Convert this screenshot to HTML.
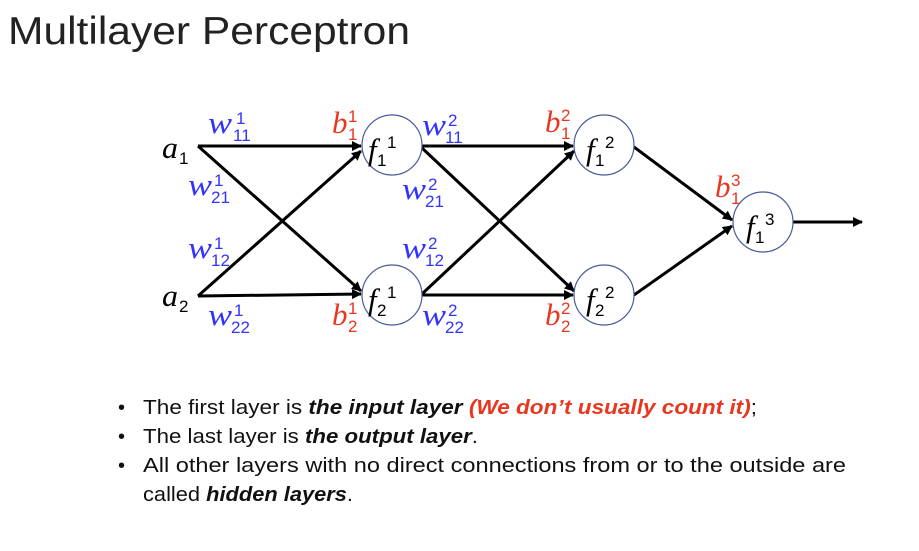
<!DOCTYPE html>
<html><head><style>
body{margin:0;background:#fff;width:919px;height:551px;overflow:hidden;font-family:"Liberation Sans",sans-serif}
svg{position:absolute;left:0;top:0}
.m{font-family:"Liberation Serif",serif;font-style:italic;font-size:31px}
.d{font-family:"Liberation Sans",sans-serif;font-size:17px}
.w{fill:#3333ff}.b{fill:#e8361f}.k{fill:#000}
</style></head><body>
<svg width="919" height="551" viewBox="0 0 919 551">
<defs><marker id="ar" markerWidth="10" markerHeight="10" refX="9" refY="5" orient="auto" markerUnits="userSpaceOnUse"><path d="M0,0 L10,5 L0,10 z" fill="#000"/></marker></defs>
<text x="8" y="44" font-size="39" fill="#222" textLength="402" lengthAdjust="spacingAndGlyphs" font-family="Liberation Sans,sans-serif">Multilayer Perceptron</text>
<g stroke="#000" stroke-width="3" fill="none" marker-end="url(#ar)">
<line x1="198" y1="146" x2="361" y2="146"/>
<line x1="198" y1="146" x2="361" y2="291"/>
<line x1="198" y1="296" x2="361" y2="294"/>
<line x1="198" y1="296" x2="361" y2="151"/>
<line x1="422" y1="146" x2="573" y2="146"/>
<line x1="422" y1="148" x2="574" y2="291"/>
<line x1="422" y1="294" x2="574" y2="151"/>
<line x1="422" y1="295" x2="573" y2="295"/>
<line x1="634" y1="147" x2="732" y2="220"/>
<line x1="634" y1="295" x2="732" y2="226"/>
<line x1="793" y1="222" x2="862" y2="222"/>
</g>
<g fill="#fff" stroke="#4a5a9a" stroke-width="1.2">
<circle cx="392" cy="145" r="30"/><circle cx="392" cy="295" r="30"/>
<circle cx="604" cy="145" r="30"/><circle cx="604" cy="295" r="30"/>
<circle cx="763" cy="222" r="30"/>
</g>
<g class="k">
<text class="m" x="162" y="158" textLength="16" lengthAdjust="spacingAndGlyphs">a</text><text class="d" x="179" y="164">1</text>
<text class="m" x="162" y="306" textLength="16" lengthAdjust="spacingAndGlyphs">a</text><text class="d" x="179" y="312">2</text>
<text class="m" x="368" y="160">f</text><text class="d" x="377" y="166">1</text><text class="d" x="387" y="148">1</text>
<text class="m" x="368" y="310">f</text><text class="d" x="377" y="316">2</text><text class="d" x="387" y="298">1</text>
<text class="m" x="586" y="160">f</text><text class="d" x="595" y="166">1</text><text class="d" x="605" y="148">2</text>
<text class="m" x="586" y="310">f</text><text class="d" x="595" y="316">2</text><text class="d" x="605" y="298">2</text>
<text class="m" x="746" y="237">f</text><text class="d" x="755" y="243">1</text><text class="d" x="765" y="225">3</text>
</g>
<g class="w">
<text class="m" x="208" y="133" textLength="24" lengthAdjust="spacingAndGlyphs">w</text><text class="d" x="233" y="141">11</text><text class="d" x="236" y="124">1</text>
<text class="m" x="188" y="195" textLength="24" lengthAdjust="spacingAndGlyphs">w</text><text class="d" x="211" y="203">21</text><text class="d" x="214" y="186">1</text>
<text class="m" x="188" y="258" textLength="24" lengthAdjust="spacingAndGlyphs">w</text><text class="d" x="211" y="266">12</text><text class="d" x="214" y="249">1</text>
<text class="m" x="208" y="325" textLength="24" lengthAdjust="spacingAndGlyphs">w</text><text class="d" x="231" y="333">22</text><text class="d" x="234" y="316">1</text>
<text class="m" x="422" y="135" textLength="24" lengthAdjust="spacingAndGlyphs">w</text><text class="d" x="445" y="143">11</text><text class="d" x="448" y="126">2</text>
<text class="m" x="402" y="199" textLength="24" lengthAdjust="spacingAndGlyphs">w</text><text class="d" x="425" y="207">21</text><text class="d" x="428" y="190">2</text>
<text class="m" x="402" y="258" textLength="24" lengthAdjust="spacingAndGlyphs">w</text><text class="d" x="425" y="266">12</text><text class="d" x="428" y="249">2</text>
<text class="m" x="422" y="325" textLength="24" lengthAdjust="spacingAndGlyphs">w</text><text class="d" x="445" y="333">22</text><text class="d" x="448" y="316">2</text>
</g>
<g class="b">
<text class="m" x="332" y="133">b</text><text class="d" x="348" y="140">1</text><text class="d" x="348" y="122">1</text>
<text class="m" x="332" y="325">b</text><text class="d" x="348" y="332">2</text><text class="d" x="348" y="314">1</text>
<text class="m" x="545" y="132">b</text><text class="d" x="561" y="139">1</text><text class="d" x="561" y="121">2</text>
<text class="m" x="545" y="325">b</text><text class="d" x="561" y="332">2</text><text class="d" x="561" y="314">2</text>
<text class="m" x="715" y="197">b</text><text class="d" x="731" y="204">1</text><text class="d" x="731" y="186">3</text>
</g>
<g font-size="20" fill="#111" font-family="Liberation Sans,sans-serif">
<text x="118" y="414">•</text><text x="118" y="443">•</text><text x="118" y="472">•</text>
<text x="143" y="414" textLength="614" lengthAdjust="spacingAndGlyphs">The first layer is <tspan font-weight="bold" font-style="italic">the input layer</tspan> <tspan font-weight="bold" font-style="italic" fill="#e8361f">(We don’t usually count it)</tspan>;</text>
<text x="143" y="443" textLength="335" lengthAdjust="spacingAndGlyphs">The last layer is <tspan font-weight="bold" font-style="italic">the output layer</tspan>.</text>
<text x="143" y="472" textLength="703" lengthAdjust="spacingAndGlyphs">All other layers with no direct connections from or to the outside are</text>
<text x="143" y="501" textLength="210" lengthAdjust="spacingAndGlyphs">called <tspan font-weight="bold" font-style="italic">hidden layers</tspan>.</text>
</g>
</svg>
</body></html>
